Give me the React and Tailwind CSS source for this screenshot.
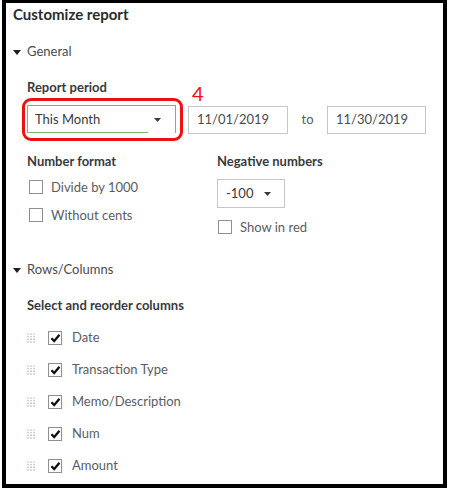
import React from 'react';

const font = { fontFamily: 'Lato, "Open Sans", sans-serif' };

const Caret = ({ className = '' }) => (
    <svg width="8" height="5" viewBox="0 0 8 5" className={className}>
        <path d="M0 0 L8 0 L4 5 Z" fill="#1f1f1f" />
    </svg>
);

const SmallCaret = () => (
    <svg width="7" height="4" viewBox="0 0 7 4">
        <path d="M0 0 L7 0 L3.5 4 Z" fill="#393a3d" />
    </svg>
);

const Checkbox = ({ checked }) => (
    <div className="w-[14px] h-[14px] border border-[#8d9096] bg-white flex items-center justify-center shrink-0">
        {checked && (
            <svg width="11" height="10" viewBox="0 0 11 10">
                <path d="M1.5 5.2 L4.2 8 L9.5 1.8" fill="none" stroke="#111" strokeWidth="2.3" />
            </svg>
        )}
    </div>
);

const DragDots = () => (
    <svg width="8" height="10" viewBox="0 0 8 10" className="shrink-0">
        {[0, 1, 2, 3].map((r) =>
            [0, 1, 2].map((c) => (
                <circle key={`${r}-${c}`} cx={1 + c * 3} cy={1 + r * 2.7} r="0.8" fill="#b5b7bb" />
            ))
        )}
    </svg>
);

const Section = ({ label }) => (
    <div className="flex items-center h-[18px] pl-[7px] gap-[6px] text-[13px] text-[#4a4b4f]">
        <Caret />
        <span>{label}</span>
    </div>
);

const CheckRow = ({ label, checked }) => (
    <div className="flex items-center h-[14px] gap-[8px] text-[13px] leading-[14px] text-[#5b5c61]">
        <Checkbox checked={checked} />
        <span>{label}</span>
    </div>
);

const columns = ['Date', 'Transaction Type', 'Memo/Description', 'Num', 'Amount'];

export default function App() {
    return (
        <div className="w-[451px] h-[493px] bg-white" style={font}>
            <div className="ml-[2px] w-[445px] h-[488px] border-[4px] border-t-[3px] border-black bg-white">
                {/* Title */}
                <div className="mt-[1px] pl-[7px] h-[20px] leading-[20px] text-[15px] font-bold text-[#2b2b2b]">
                    Customize report
                </div>

                <div className="mt-[19px]">
                    <Section label="General" />
                </div>

                <div className="pl-[21px]">
                    <div className="mt-[17px] h-[18px] leading-[18px] text-[13px] font-bold text-[#393a3d]">
                        Report period
                    </div>

                    {/* Report period row */}
                    <div className="relative mt-[2px] flex items-center ml-[-5px]">
                        <div className="border-[3px] border-[#ee1111] rounded-[9px] pl-[2px] pr-[4px] pt-[4px] pb-[5px]">
                            <div className="relative w-[149px] h-[28px] border border-b-0 border-[#78b863] flex items-center justify-between pl-[7px] pr-[14px] text-[13px] text-[#393a3d]">
                                <span>This Month</span>
                                <SmallCaret />
                                <div className="absolute left-[-1px] bottom-0 w-[121px] h-px bg-[#78b863]" />
                            </div>
                        </div>
                        <div className="absolute left-[170px] top-[-15px] text-[20px] leading-[20px] text-[#ee1111]">4</div>
                        <div className="ml-[5px] w-[100px] h-[28px] border border-[#c4c6ca] flex items-center pl-[8px] text-[13px] text-[#4a4b4f]">
                            11/01/2019
                        </div>
                        <div className="w-[39px] text-center text-[13px] text-[#5b5c61]">to</div>
                        <div className="w-[99px] h-[28px] border border-[#c4c6ca] flex items-center pl-[8px] text-[13px] text-[#4a4b4f]">
                            11/30/2019
                        </div>
                    </div>

                    {/* Number format / Negative numbers */}
                    <div className="mt-[11px] flex">
                        <div className="w-[190px]">
                            <div className="h-[18px] leading-[18px] text-[13px] font-bold text-[#393a3d]">Number format</div>
                            <div className="mt-[10px] pl-[2px] flex flex-col gap-[14px]">
                                <CheckRow label="Divide by 1000" />
                                <CheckRow label="Without cents" />
                            </div>
                        </div>
                        <div>
                            <div className="h-[18px] leading-[18px] text-[13px] font-bold text-[#393a3d]">Negative numbers</div>
                            <div className="mt-[9px] w-[68px] h-[29px] border border-[#c4c6ca] flex items-center justify-between pl-[8px] pr-[13px] text-[13px] text-[#393a3d]">
                                <span>-100</span>
                                <SmallCaret />
                            </div>
                            <div className="mt-[12px] pl-[1px]">
                                <CheckRow label="Show in red" />
                            </div>
                        </div>
                    </div>
                </div>

                <div className="mt-[27px]">
                    <Section label="Rows/Columns" />
                </div>

                <div className="pl-[21px]">
                    <div className="mt-[17px] h-[18px] leading-[18px] text-[13px] font-bold text-[#393a3d]">
                        Select and reorder columns
                    </div>
                    <div className="mt-[8px] flex flex-col">
                        {columns.map((c) => (
                            <div key={c} className="h-[32px] flex items-center">
                                <DragDots />
                                <div className="ml-[13px]">
                                    <Checkbox checked />
                                </div>
                                <span className="ml-[10px] text-[13px] text-[#5b5c61]">{c}</span>
                            </div>
                        ))}
                    </div>
                </div>
            </div>
        </div>
    );
}
